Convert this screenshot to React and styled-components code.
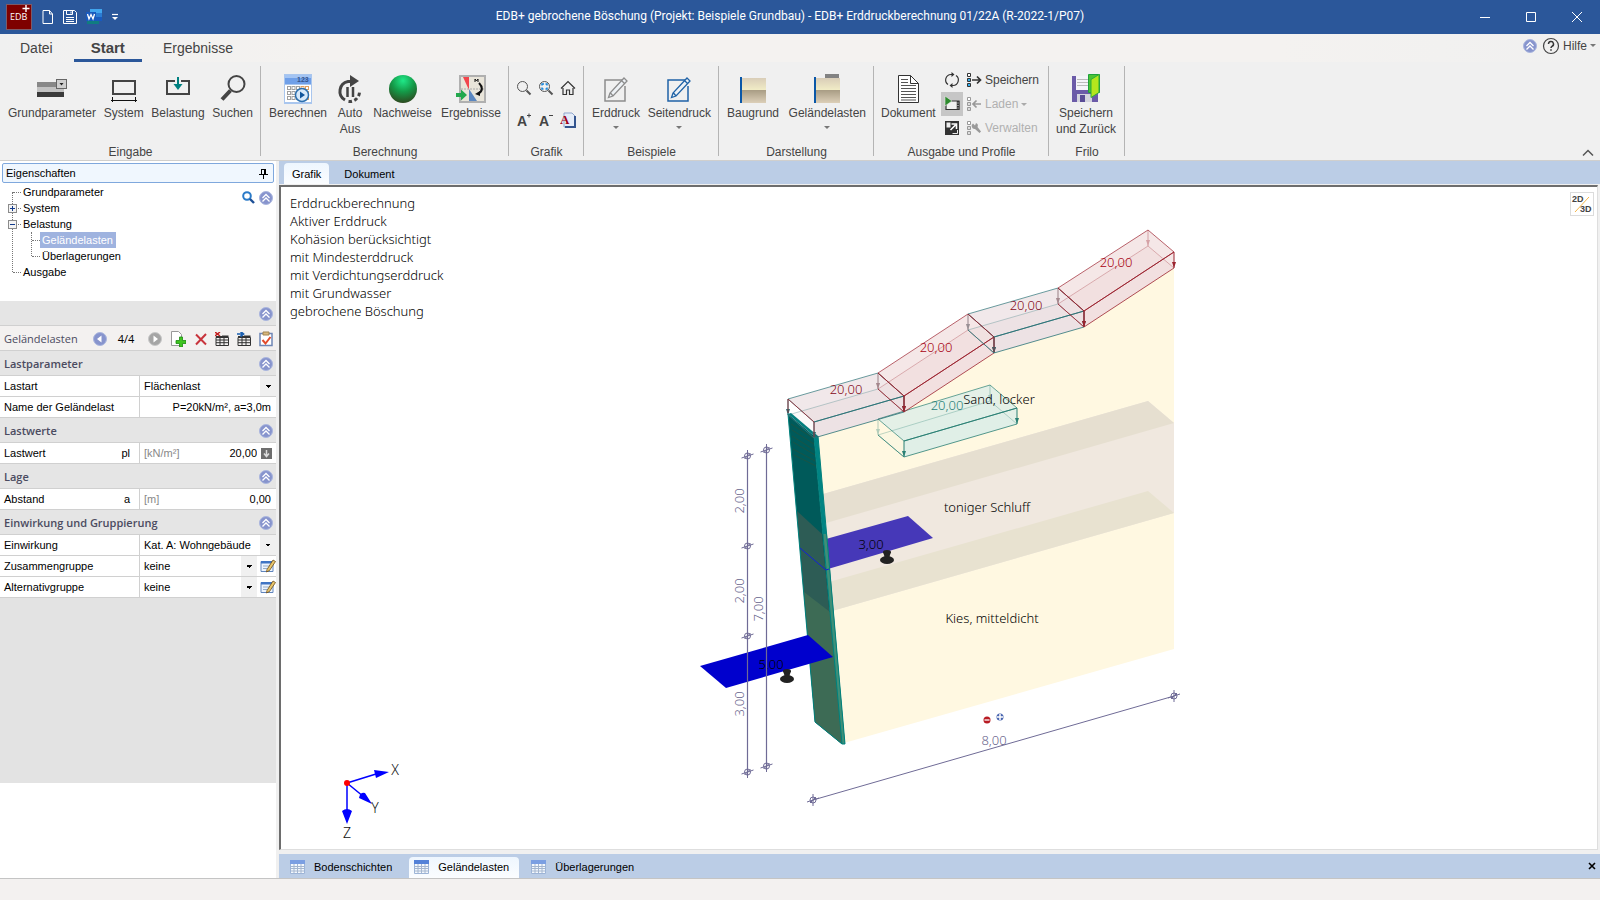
import React, { useState } from 'react'
import styled, { createGlobalStyle, css } from 'styled-components'

const GlobalStyle = createGlobalStyle`
  * { box-sizing: border-box; }
  html, body, #root { height: 100%; margin: 0; }
  body { font-family: 'Liberation Sans', Arial, sans-serif; font-size: 11px; color: #000; background: #f0f0f0; overflow: hidden; }
  button, input, select { font: inherit; color: inherit; margin: 0; }
  button { background: none; border: 0; padding: 0; }
  svg { display: block; }
  h2 { margin: 0; }
`

/* ---------- icons ---------- */
const Svg = ({ w = 16, h = w, box, children }) => (
  <svg width={w} height={h} viewBox={box || `0 0 ${w} ${h}`} fill='none' aria-hidden='true'>
    {children}
  </svg>
)

const Logo = () => (
  <Svg w={26}>
    <rect x='.5' y='.5' width='25' height='25' fill='#7e0000' stroke='#7d5a68' />
    <text x='4' y='16' fontSize='9' fontFamily='Open Sans, sans-serif' fill='#fff'>EDB</text>
    <path d='M20 1v7M16.500 4.500h7' stroke='#fff' strokeWidth='1.400' />
  </Svg>
)
const NewIcon = () => (
  <Svg w={14} h={16} box='-2 0 14 16'>
    <path d='M1 1.500h6.500L10.500 5v9.500H1zM7.500 1.500V5h3' stroke='#fff' />
  </Svg>
)
const SaveIcon = () => (
  <Svg w={16}>
    <path d='M1.500 1.500h11l2 2v11h-13zM4.500 1.500v4h6v-4M9 2.500v2M4 8.500h8M4 10.500h8M4 12.500h8' stroke='#fff' />
  </Svg>
)
const WordIcon = () => (
  <Svg w={16}>
    <path d='M4 0h12v5H4z' fill='#41a5ee' />
    <path d='M4 4h12v4H4z' fill='#2b7cd3' />
    <path d='M4 8h12v4H4z' fill='#185abd' />
    <path d='M1 12h12v3H1z' fill='#107c80' />
    <path d='M0 3h10v9H0z' fill='#185abd' />
    <path d='M1.500 5l1.500 5 2-4.500L7 10l1.500-5' stroke='#fff' strokeWidth='1.300' />
  </Svg>
)
const GrundIcon = () => (
  <Svg w={32} h={28}>
    <path d='M1 7h27v5H1z' fill='#888' />
    <path d='M1 12h27v5H1z' fill='#c2c2c2' />
    <path d='M1 17h27v5H1z' fill='#3a3a3a' />
    <rect x='20.500' y='4.500' width='10' height='9' fill='#cfcfcf' stroke='#666' />
    <path d='M23.500 8h4l-2 2.500z' fill='#222' />
  </Svg>
)
const SystemIcon = () => (
  <Svg w={28}>
    <rect x='3' y='6' width='22' height='13' stroke='#444' strokeWidth='2' />
    <path d='M1 25.500h26M2.500 22v5M25.500 22v5' stroke='#111' />
  </Svg>
)
const BelastIcon = () => (
  <Svg w={28}>
    <rect x='3' y='6' width='22' height='13' stroke='#444' strokeWidth='2' />
    <path d='M11 3h6v5h-6z' fill='#f0f0f0' />
    <path d='M14 2v9' stroke='#008080' strokeWidth='2' />
    <path d='M9.500 9h9L14 15z' fill='#008080' />
  </Svg>
)
const SearchBigIcon = () => (
  <Svg w={28}>
    <circle cx='17.500' cy='9' r='8' stroke='#444' strokeWidth='2' />
    <path d='M11.500 15.500L3 24.500' stroke='#444' strokeWidth='4' />
  </Svg>
)
const CalcIcon = () => (
  <Svg w={30}>
    <rect x='1' y='0' width='28' height='30' fill='#a9c6ee' />
    <rect x='2' y='1' width='26' height='9' fill='#6f9fe8' />
    <rect x='2' y='1' width='26' height='3' fill='#a3c4f3' />
    <text x='14' y='8' fontSize='7' fontWeight='700' fill='#35548c'>123</text>
    <rect x='2' y='11' width='26' height='17' fill='#fff' />
    {[12.5, 17.5, 22.5].map((y) =>
      [4.5, 9, 13.5, 18, 22.5].map((x) => (
        <rect key={`${x}-${y}`} x={x} y={y} width='3' height='3' fill='#fff' stroke={x > 17 ? '#e0a060' : '#a0a0a0'} />
      ))
    )}
    <circle cx='19' cy='21' r='6.500' fill='#d7e9fa' stroke='#2c6fae' strokeWidth='1.500' />
    <path d='M17 17.500l5 3.500-5 3.500z' fill='#12569c' />
  </Svg>
)
const AutoIcon = () => (
  <Svg w={28}>
    <path d='M9 25A10 10 0 0 1 12 6.500h4' stroke='#444' strokeWidth='3' />
    <path d='M14 0l9 6-9 6z' fill='#444' />
    <path d='M12.500 26.500a10 10 0 0 0 11-9' stroke='#444' strokeWidth='3' strokeDasharray='3.500 2.500' />
    <path d='M11.500 12v10M17 12v10' stroke='#444' strokeWidth='2.500' />
  </Svg>
)
const BallIcon = () => (
  <Svg w={30}>
    <defs>
      <radialGradient id='ball' cx='.5' cy='.2' r='.8'>
        <stop offset='0' stopColor='#1fe888' />
        <stop offset='.5' stopColor='#149a48' />
        <stop offset='1' stopColor='#2d4a20' />
      </radialGradient>
    </defs>
    <circle cx='15' cy='15' r='14' fill='url(#ball)' />
  </Svg>
)
const ResultIcon = () => (
  <Svg w={32} h={30}>
    <rect x='5' y='2' width='25' height='26' fill='#e9e5da' stroke='#b0b0b0' strokeWidth='2' />
    <path d='M8 3h6v13z' fill='#f2454c' />
    <path d='M14 15l8 12h-8z' fill='#5b87c0' />
    <path d='M6 15h23' stroke='#aaa' strokeDasharray='2 1' />
    <path d='M24 9c4 4 4 8-1 11' stroke='#111' strokeWidth='2' />
    <path d='M20 20l5-3v5z' fill='#111' />
    <path d='M20 8V5l1.500 2L23 5v3' stroke='#111' />
    <path d='M1 19h5v-3.500l6 5.500-6 5.500V23H1z' fill='#22a84d' />
  </Svg>
)
const LupeIcon = ({ area }) => (
  <Svg w={16}>
    <circle cx='6.500' cy='6.500' r='5' stroke='#555' />
    <path d='M10.500 10.500l4 4' stroke='#555' strokeWidth='2' />
    {area && <path d='M4 5.500V4h2M7.500 4H9v1.500M9 7.500V9H7.500M5.500 9H4V7.500' stroke='#1683d8' strokeWidth='1.500' />}
  </Svg>
)
const HomeIcon = () => (
  <Svg w={16}>
    <path d='M1 8.500L8 1.500l7 7M3 8v6.500h3.500V10h3v4.500H13V8' stroke='#333' strokeWidth='1.200' />
  </Svg>
)
const FontIcon = ({ sign }) => (
  <Svg w={16}>
    <text x='1' y='14' fontSize='14' fontWeight='700' fill='#444'>A</text>
    <path d={sign === '+' ? 'M11 3.500h4M13 1.500v4' : 'M11 3.500h4'} stroke='#444' />
  </Svg>
)
const FontDocIcon = () => (
  <Svg w={16}>
    <path d='M4 1h8l3 3v11H4z' fill='#e4ecf8' stroke='#8fa5cc' />
    <path d='M15 4v11H5' stroke='#33548e' strokeWidth='2' />
    <text x='0' y='12' fontSize='13' fontWeight='700' fontFamily='Liberation Serif, serif' fill='#a00018'>A</text>
  </Svg>
)
const EditIcon = ({ color }) => (
  <Svg w={28}>
    <path d='M20 5H3v21h20V11' stroke={color} strokeWidth='1.500' />
    <path d='M22 3l3 3L11 21l-4.500 1.500L8 18zM19.500 5.500l3 3M8.500 18l2.500 3' stroke={color} strokeWidth='1.300' fill='#eef2f6' />
  </Svg>
)
const SoilIcon = ({ load }) => (
  <Svg w={28} h={30}>
    <defs>
      <linearGradient id='soilTop' x1='0' y1='0' x2='0' y2='1'>
        <stop offset='0' stopColor='#d9cdb8' />
        <stop offset='1' stopColor='#f1ecc6' />
      </linearGradient>
      <linearGradient id='soilLow' x1='0' y1='0' x2='0' y2='1'>
        <stop offset='0' stopColor='#a89c84' />
        <stop offset='1' stopColor='#dccfb8' />
      </linearGradient>
    </defs>
    {load && <path d='M12 0h14v5H12z' fill='#828282' />}
    <path d='M2 4h25v12H2z' fill='url(#soilTop)' />
    <path d='M2 16h25v13H2z' fill='url(#soilLow)' />
    <path d='M2 3v26' stroke='#0a57a8' strokeWidth='2' />
  </Svg>
)
const DocIcon = () => (
  <Svg w={24} h={30}>
    <path d='M2.500 1.500h12l8 8v19h-20z' fill='#fff' stroke='#333' />
    <path d='M14.500 1.500v8h8' stroke='#333' />
    <path d='M5 5.500h7M5 8.500h7M5 11.500h15M5 14.500h15M5 17.500h15M5 20.500h15M5 23.500h15M5 26h15' stroke='#555' />
  </Svg>
)
const RefreshIcon = () => (
  <Svg w={16}>
    <path d='M4 12.500A5.500 5.500 0 0 1 7 2.500h2M12 3.500a5.500 5.500 0 0 1-3 10H7' stroke='#333' strokeWidth='1.200' />
    <path d='M7.500 0l3 2.500-3 2.500zM8.500 11l-3 2.500 3 2.500z' fill='#333' />
  </Svg>
)
const FilmIcon = () => (
  <Svg w={16}>
    <path d='M2 5h13v8.500H2z' fill='#f0f0f0' stroke='#333' strokeWidth='1.200' />
    <path d='M14 5v9' stroke='#333' strokeWidth='2.500' />
    <path d='M13.500 7h1M13.500 9.500h1M13.500 12h1' stroke='#eee' />
    <path d='M1 0l7 5-7 5z' fill='#2e8b2e' stroke='#e8e8e8' strokeWidth='.6' />
  </Svg>
)
const ExpandIcon = () => (
  <Svg w={16}>
    <path d='M1 1h14v14H1z' fill='#333' />
    <path d='M2.500 2.500h4v5h-4z' fill='#eee' />
    <path d='M8.500 13.500H13.500V10' stroke='#eee' />
    <path d='M6.500 10l5-5M7.500 4h5v5' stroke='#fff' strokeWidth='1.600' />
  </Svg>
)
const ProfileIcon = ({ kind }) => {
  const c = kind === 'save' ? '#333' : '#999'
  return (
    <Svg w={16}>
      <path d='M1.500 1.500h3v3h-3z' stroke={c} fill='#fff' />
      <path d='M1.500 6.500h3v3h-3zM1.500 11.500h3v3h-3z' stroke={c} fill={kind === 'save' ? '#35b0f0' : '#ddd'} />
      {kind === 'save' && <path d='M6 8h8M11 4.500L14.500 8 11 11.500' stroke={c} strokeWidth='1.700' />}
      {kind === 'load' && <path d='M15 8H8M10.500 4.500L7 8l3.500 3.500' stroke={c} strokeWidth='1.700' />}
      {kind === 'tool' && <path d='M7 3.500l2 2 1-2.500a3 3 0 0 1 1.500 4l3.500 4.500-1.500 1.500L9 9a3 3 0 0 1-2-5.500z' fill={c} />}
    </Svg>
  )
}
const SaveBackIcon = () => (
  <Svg w={30}>
    <path d='M1 2h26v26H1z' fill='#6b5ba8' />
    <path d='M5 2h13v14H5z' fill='#f4f4f8' />
    <path d='M6 5.500h11M6 8.500h11M6 11.500h11' stroke='#bbb' />
    <path d='M6 20h15v8H6z' fill='#d4d4de' />
    <path d='M9 21h5v7H9z' fill='#5a4c96' />
    <path d='M17.500 .5h11v18h-11z' fill='#4cc435' stroke='#1ea03c' />
    <path d='M20 5.500l8-5v18l-8 5z' fill='#b5e61d' stroke='#2cab3c' />
  </Svg>
)
const UpDisc = () => (
  <Svg w={14}>
    <circle cx='7' cy='7' r='6.500' fill='#8794cd' stroke='#aab6de' />
    <path d='M3.500 7L7 3.500 10.500 7M3.500 10.500L7 7l3.500 3.500' stroke='#fff' strokeWidth='1.300' />
  </Svg>
)
const StepDisc = ({ next }) => (
  <Svg w={14}>
    <circle cx='7' cy='7' r='6.500' fill={next ? '#a5a5a5' : '#8794cd'} stroke={next ? '#c8c8c8' : '#aab6de'} />
    <path d={next ? 'M5.500 3.500L10 7l-4.500 3.500z' : 'M8.500 3.500L4 7l4.500 3.500z'} fill='#fff' />
  </Svg>
)
const AddIcon = () => (
  <Svg w={16}>
    <path d='M1.500 .5h7l3 3v11h-10z' fill='#fff' stroke='#999' />
    <path d='M9.500 6h3v3.500H16v3h-3.500V16h-3v-3.500H6v-3h3.500z' fill='#3fc41f' stroke='#1c8a10' strokeWidth='.8' />
  </Svg>
)
const CrossIcon = () => (
  <Svg w={14}>
    <path d='M2 2.500l10 10M12 2L2 12.500' stroke='#c8343c' strokeWidth='2' />
  </Svg>
)
const GridIcon = ({ mark }) => (
  <Svg w={14}>
    <path d='M1 5.500h12.500v8H1zM1 8h12M1 10.700h12M5 5.500v8M9 5.500v8' stroke='#333' />
    <path d='M1 4.500h12.500' stroke='#333' strokeWidth='2' />
    <path d='M0 0h7v4H0z' fill='#f3f1f0' />
    {mark === 'x' ? (
      <path d='M0 0l5 4M5 0L0 4' stroke='#c32020' strokeWidth='1.500' />
    ) : (
      <path d='M0 2h5M3.500 -.5L6.500 2 3.500 4.500' stroke='#1a5fb0' strokeWidth='1.700' />
    )}
  </Svg>
)
const ClipIcon = () => (
  <Svg w={14} h={16}>
    <path d='M1 2.500h12v12H1z' fill='#fff' stroke='#6f86b5' strokeWidth='1.500' />
    <path d='M4 1h6v3H4z' fill='#d9b87c' stroke='#a08450' />
    <path d='M3.500 9l3 3.500L11.500 6' stroke='#e24a2a' strokeWidth='2' />
  </Svg>
)
const NoteIcon = () => (
  <Svg w={16}>
    <path d='M1 3.500h12v10H1z' fill='#eef4fc' stroke='#6085bd' />
    <path d='M1 3h12v2.500H1z' fill='#3f74c4' />
    <path d='M3 8h6M3 10.500h4' stroke='#94abc9' />
    <path d='M7 11.500l6-9.500 2.500 1.500-6 9L6.500 14z' fill='#e8c56a' stroke='#6b4b1c' strokeWidth='.8' />
  </Svg>
)
const TableIcon = ({ hot }) => (
  <Svg w={16} h={14}>
    <path d='M.5 .5h14v13H.5z' fill='#f4f8fd' stroke='#9db4d6' />
    <path d='M0 0h15v4H0z' fill={hot ? '#5482d8' : '#7b9fe2'} />
    <path d='M1 6.500h13M1 8.500h13M1 11h13M4 4v9M7.500 4v9M11 4v9' stroke='#a4b6cf' />
  </Svg>
)

/* ---------- title bar ---------- */
const Shell = styled.div`
  display: flex;
  flex-direction: column;
  min-height: 100vh;
`
const TitleBar = styled.header`
  display: grid;
  grid-template-columns: 1fr auto 1fr;
  align-items: center;
  height: 34px;
  background: #2b579a;
  color: #fff;
`
const QuickBar = styled.div`
  display: flex;
  align-items: center;
  gap: 8px;
  padding-left: 6px;
`
const Title = styled.div`
  font: 12px/20px Roboto, sans-serif;
  padding-bottom: 2px;
  margin-right: 20px;
`
const WinButtons = styled.div`
  display: flex;
  justify-content: flex-end;
  button { width: 46px; height: 34px; display: grid; place-items: center; }
`

/* ---------- ribbon ---------- */
const TabRow = styled.nav`
  display: flex;
  height: 28px;
  padding-left: 2px;
  background: linear-gradient(90deg, #f0f0f0, #f4f2f0 20%, #f4f2f0 80%, #f0f0f0);
  color: #444;
`
const RibbonTab = styled.button`
  padding: 2px 18px 0;
  font-size: 14px;
  line-height: 24px;
  border-bottom: 3px solid transparent;
  ${(p) => p.$active && css`
    padding: 2px 17px 0;
    font-size: 15px;
    font-weight: 700;
    border-color: #2b579a;
    margin: 0 3px;
  `}
`
const HelpBox = styled.div`
  margin-left: auto;
  display: flex;
  align-items: center;
  gap: 5px;
  padding: 0 4px 5px 0;
  font-size: 12px;
  button { display: flex; align-items: center; gap: 3px; }
`
const Ribbon = styled.section`
  display: flex;
  height: 99px;
  padding-top: 4px;
  border-bottom: 1px solid #d0cfcd;
  background: #f0f0f0;
  color: #444;
  font-size: 12px;
  line-height: 16px;
`
const Group = styled.div`
  flex: none;
  width: ${(p) => p.$w}px;
  display: flex;
  flex-direction: column;
  background: linear-gradient(#b4b4b4, #b4b4b4) right top / 1px 90px no-repeat;
`
const GroupBody = styled.div`
  flex: 1;
  display: flex;
  justify-content: space-between;
  padding: 7px ${(p) => p.$pad || 8}px 0;
`
const GroupName = styled.div`
  text-align: center;
  height: 16px;
`
const BigButton = styled.button`
  display: flex;
  flex-direction: column;
  align-items: center;
  white-space: pre;
  line-height: 16px;
  align-self: flex-start;
`
const BigIcon = styled.span`
  height: 32px;
  display: grid;
  place-items: center;
`
const Caret = styled.span`
  display: inline-block;
  width: 0;
  height: 0;
  border: 3px solid transparent;
  border-top-color: #777;
  border-bottom: 0;
  ${(p) => p.$below && css`margin-top: 5px;`}
`
const IconGrid = styled.div`
  display: grid;
  grid-template-columns: repeat(3, 22px);
  grid-auto-rows: 32px;
  margin-top: -1px;
  button { display: grid; place-items: center; }
`
const SmallCol = styled.div`
  display: flex;
  flex-direction: column;
  margin-top: -5px;
  &:nth-child(2) { margin-left: auto; }
`
const SmallButton = styled.button`
  display: flex;
  align-items: center;
  gap: 3px;
  height: 24px;
  padding: 0 3px;
  color: ${(p) => (p.$off ? '#b0b0b0' : '#444')};
  background: ${(p) => (p.$on ? '#c6c6c6' : 'none')};
  ${Caret} { border-top-color: #aaa; }
`
const Collapse = styled.button`
  margin: auto 6px 0 auto;
  padding: 0 0 3px;
`

/* ---------- left panel ---------- */
const Body = styled.main`
  flex: 1;
  display: flex;
  min-height: 0;
`
const Side = styled.aside`
  flex: none;
  width: 276px;
  display: flex;
  flex-direction: column;
  background: #fff;
`
const SideHead = styled.div`
  display: flex;
  align-items: center;
  justify-content: space-between;
  height: 20px;
  margin: 2px 2px 0;
  padding: 0 5px 0 3px;
  border: 1px solid #7fa8dd;
  border-radius: 2px;
  background: #f0f7fe;
`
const TreeBox = styled.div`
  display: flex;
  justify-content: space-between;
  height: 118px;
  padding: 1px 3px 0 0;
`
const TreeTools = styled.div`
  display: flex;
  gap: 4px;
  padding-top: 5px;
  height: 22px;
`
const Tree = styled.ul`
  list-style: none;
  margin: 0;
  padding: 0;
  position: relative;
  &::before {
    content: '';
    position: absolute;
    left: 12px;
    top: ${(p) => (p.$sub ? 0 : 8)}px;
    height: ${(p) => p.$line}px;
    border-left: 1px dotted #777;
  }
  ${(p) => p.$sub && css`margin-left: -5px;`}
`
const TreeItem = styled.li`
  position: relative;
  line-height: 16px;
  padding-left: 24px;
  &::before {
    content: '';
    position: absolute;
    left: 13px;
    top: 8px;
    width: 8px;
    border-top: 1px dotted #777;
  }
`
const Pick = styled.button`
  padding: 0 3px 0 2px;
  margin-left: -3px;
  line-height: 16px;
  ${(p) => p.$on && css`background: #9fb3df; color: #fff;`}
`
const Expander = styled.span`
  position: absolute;
  z-index: 1;
  left: 8px;
  top: 4px;
  width: 9px;
  height: 9px;
  border: 1px solid #8b8b8b;
  background: linear-gradient(#123a8c, #123a8c) center / 5px 1px no-repeat, #f4f4f4;
  ${(p) => p.$plus && css`
    background: linear-gradient(#123a8c, #123a8c) center / 5px 1px no-repeat,
      linear-gradient(#123a8c, #123a8c) center / 1px 5px no-repeat, #f4f4f4;
  `}
`
const SectionHead = styled.div`
  display: flex;
  align-items: center;
  justify-content: space-between;
  height: 25px;
  padding: 1px 3px 0 4px;
  border-bottom: 1px solid #d0d0d0;
  background: #e5e5e5;
  h2 { font: 600 11px/18px 'Open Sans', sans-serif; color: #4b4b60; }
`
const RecordBar = styled.div`
  display: flex;
  align-items: center;
  height: 25px;
  padding: 1px 3px 0 4px;
  border-bottom: 1px solid #d0d0d0;
  background: #f3f1f0;
  h2 { font: 500 11px/18px 'Open Sans', sans-serif; color: #4b4b60; width: 89px; }
  output { width: 38px; text-align: center; margin-right: 3px; font: 11px/18px 'Open Sans', sans-serif; }
`
const RecordTools = styled.div`
  display: flex;
  align-items: center;
  justify-content: space-between;
  flex: 1;
`
const Row = styled.div`
  display: grid;
  grid-template-columns: 139px 1fr;
  height: 21px;
  border-bottom: 1px solid #d0d0d0;
  background: #fff;
  line-height: 20px;
  label { display: flex; justify-content: space-between; padding: 0 9px 0 4px; }
`
const Cell = styled.div`
  display: flex;
  align-items: center;
  min-width: 0;
  border-left: 1px solid #d0d0d0;
  padding-left: 4px;
`
const Unit = styled.span`
  color: #888;
`
const Field = styled.input`
  flex: 1;
  min-width: 0;
  height: 18px;
  border: 0;
  padding: 0;
  margin-right: ${(p) => (p.$tight ? 0 : 5)}px;
  text-align: right;
  background: none;
  outline: 0;
`
const Select = styled.select`
  flex: 1;
  min-width: 0;
  height: 20px;
  border: 0;
  outline: 0;
  padding: 0 16px 0 0;
  appearance: none;
  background:
    linear-gradient(45deg, transparent 50%, #000 50%) right 8px center / 3px 3px no-repeat,
    linear-gradient(-45deg, transparent 50%, #000 50%) right 5px center / 3px 3px no-repeat,
    linear-gradient(#f0f0f0, #f0f0f0) right / 16px 20px no-repeat;
`
const NoteButton = styled.button`
  padding: 0 0 0 3px;
`
const Filler = styled.div`
  height: 185px;
  background: #e3e3e3;
`

/* ---------- drawing area ---------- */
const Work = styled.section`
  flex: 1;
  min-width: 0;
  display: flex;
  flex-direction: column;
  margin-left: 3px;
`
const DocTabs = styled.div`
  display: flex;
  align-items: flex-end;
  height: 23px;
  padding-left: 5px;
  background: #bbcde6;
`
const DocTab = styled.button`
  height: 21px;
  display: flex;
  align-items: center;
  padding: 0 8px;
  margin-right: 7px;
  border-radius: 4px 4px 0 0;
  background: ${(p) => (p.$on ? 'linear-gradient(#eef6fe, #fbfdff)' : 'none')};
`
const Canvas = styled.div`
  position: relative;
  flex: 1;
  min-height: 0;
  margin: 1px 2px 4px 0;
  border: solid #6d6d6d;
  border-width: 2px 1px 1px 2px;
  border-right-color: #dedede;
  border-bottom-color: #dedede;
  background: #fff;
  > svg { position: absolute; inset: 0; width: 100%; height: 100%; }
`
const Info = styled.div`
  position: absolute;
  left: 9px;
  top: 7px;
  font: 300 13px/18px 'Noto Sans', sans-serif;
  color: #000;
`
const ViewButton = styled.button`
  position: absolute;
  right: 3px;
  top: 5px;
  border: 1px solid #dcdcdc;
  background: #fff;
`
const BottomTabs = styled(DocTabs)`
  height: 24px;
  padding-left: 6px;
`
const TableTab = styled(DocTab)`
  gap: 8px;
  padding: 0 10px 2px 5px;
`
const CloseTab = styled.button`
  margin: 0 0 1px auto;
  padding: 4px;
  align-self: center;
`
const Status = styled.footer`
  height: 22px;
  border-top: 1px solid #c4c4c4;
  background: #f3f1f0;
`

/* ---------- 3D scene ---------- */
const back = [[788, 399], [878, 373], [968, 314], [1058, 288], [1148, 230]]
const front = [[814, 422], [904, 396], [994, 337], [1084, 311], [1174, 252]]
const labels = [[846, 390], [936, 348], [1026, 306], [1116, 263]]
const down = ([x, y]) => [x, y + 16]
const pts = (...list) => list.map((p) => p.join(',')).join(' ')

const Arrow = ({ at: [x, y], color, faint }) => (
  <g opacity={faint ? 0.35 : 1}>
    <path d={`M${x} ${y}v16`} stroke={color} />
    <path d={`M${x - 2} ${y + 10}h4l-2 6z`} fill={color} />
  </g>
)

const LoadBox = ({ i, b0, b1, f0, f1, color, fill, alpha = 0.11, label, text }) => (
  <g>
    <g fill={fill}>
      <polygon points={pts(b0, b1, f1, down(f1), down(f0), f0)} fillOpacity={alpha} />
      <polygon points={pts(down(b0), down(b1), down(f1), down(f0))} fillOpacity='.03' />
    </g>
    <g stroke={color} strokeWidth='1' fill='none'>
      <polyline points={pts(down(f0), down(b0), down(b1), down(f1))} opacity='.3' />
      <polygon points={pts(b0, b1, f1, f0)} opacity='.7' />
      <path d={`M${f0}L${f1}`} />
      <path d={`M${down(f0)}L${down(f1)}M${down(b0)}L${down(f0)}`} opacity='.8' />
    </g>
    <Arrow at={b0} color={color} faint={i > 0} />
    <Arrow at={b1} color={color} faint />
    <Arrow at={f0} color={color} />
    <Arrow at={f1} color={color} />
    <text x={label[0]} y={label[1]} dy='4' fill={text} textAnchor='middle'>20,00</text>
  </g>
)

const Mark = ({ x, y }) => (
  <g>
    <circle cx={x} cy={y} r='3' />
    <path d={`M${x} ${y - 6}v12M${x - 6} ${y + 2}l12-4M${x - 3} ${y + 3}l6-6`} />
  </g>
)

const Support = ({ x, y }) => (
  <g fill='#222'>
    <ellipse cx={x} cy={y} rx='7' ry='4' />
    <path d={`M${x - 4} ${y - 8}h8l-2 6h-4z`} />
    <ellipse cx={x} cy={y - 8} rx='4' ry='2' />
  </g>
)

const Scene = () => (
  <svg viewBox='281 187 1316 662' fontFamily='Noto Sans, sans-serif' fontWeight='300' fontSize='13' role='img' aria-label='Böschung'>
    <polygon points='817,437 904,412 994,353 1084,327 1174,268 1174,649 844,743' fill='#fff8e1' />
    <polygon points='823,494 1148,401 1174,423 1174,513 832,611' fill='#f0e8df' />
    <polygon points='823,494 1148,401 1174,423 826,523' fill='#e6dfd0' />
    <polygon points='829,582 1148,491 1174,513 832,611' fill='#e8e2d0' />

    <polygon points='826,539 908,516 933,538 828,569' fill='#4638b8' />
    <polygon points='788,414 814,436 842,744 815,722' fill='#005a5a' />
    <polygon points='797,511 822,534 842,744 815,722' fill='#2d5c55' />
    <polygon points='804,592 830,612 842,744 815,722' fill='#3d6b55' />
    <polygon points='788,414 814,436 818,436 791,413' fill='#008080' />
    <polygon points='814,436 818,436 845,744 842,744' fill='#008484' />
    <polygon points='823,534 827,534 845,744 842,744' fill='#3f8f78' />
    <path d='M788 414L815 722L842 744h3L818 436M814 436L842 744' stroke='#00807c' fill='none' />
    <g stroke='#4b4a20' strokeWidth='1' opacity='.35'>
      <path d='M791 424l22 14M792 430l22 14M792 436l22 14M793 442l22 13M793 449l22 12M794 455l22 11' />
    </g>
    <path d='M800 548L826 570L829 569' stroke='#1420d8' fill='none' />
    <polygon points='700,666 808,635 833,657 726,688' fill='#0000cd' />

    <LoadBox i={1} b0={[878, 419]} b1={[990, 385]} f0={[904, 441]} f1={[1017, 408]} color='#2a8074' fill='#84d4ff' alpha={0.22} label={[947, 406]} text='#1f8078' />
    {labels.map((label, i) => (
      <LoadBox
        key={label[0]}
        i={i}
        b0={back[i]}
        b1={back[i + 1]}
        f0={front[i]}
        f1={front[i + 1]}
        color={i % 2 ? '#9c2430' : '#2c7478'}
        fill={i % 2 ? '#a02020' : '#803040'}
        label={label}
        text={i % 2 ? '#a80010' : '#840818'}
      />
    ))}
    <g stroke='#98202c' fill='none' opacity='.8'>
      <path d='M788 399l26 23M878 373l26 23M968 314l26 23M1058 288l26 23' />
      <path d='M788 399v14M814 422v15M904 396v15M994 337v15M1084 311v15' />
    </g>

    <g fill='#000' textAnchor='middle'>
      <text x='999' y='404'>Sand, locker</text>
      <text x='987' y='512'>toniger Schluff</text>
      <text x='992' y='623'>Kies, mitteldicht</text>
      <text x='871' y='549'>3,00</text>
      <text x='771' y='669'>5,00</text>
    </g>
    <Support x={887} y={560} />
    <Support x={787} y={679} />

    <g stroke='#6f6b96' fill='none'>
      <path d='M747.500 452V776M766.500 446V770' strokeWidth='1.200' />
      <path d='M813 800L1174 696' />
      <Mark x={747.5} y={456} />
      <Mark x={747.5} y={546} />
      <Mark x={747.5} y={636} />
      <Mark x={747.5} y={772} />
      <Mark x={766.5} y={450} />
      <Mark x={766.5} y={766} />
      <Mark x={813} y={800} />
      <Mark x={1174} y={696} />
    </g>
    <g fill='#67638c' textAnchor='middle'>
      <text transform='translate(744 501) rotate(-90)'>2,00</text>
      <text transform='translate(744 591) rotate(-90)'>2,00</text>
      <text transform='translate(763 609) rotate(-90)'>7,00</text>
      <text transform='translate(744 704) rotate(-90)'>3,00</text>
      <text x='994' y='745'>8,00</text>
    </g>
    <circle cx='987' cy='720' r='3.500' fill='#b81c24' />
    <path d='M984.500 720h5' stroke='#fff' strokeWidth='1.300' />
    <circle cx='1000' cy='717' r='3.500' fill='#4a66b0' />
    <path d='M997 717h6M1000 714v6' stroke='#fff' strokeWidth='1.500' />

    <g stroke='#0000ff' strokeWidth='1.500' fill='#0000ff'>
      <path d='M347 783L376 774M347 783L364 797M347 783V812' />
      <path d='M374 770l15 2-13 6zM359 798q1-6 6-5l7 11zM342 811q5-4 10 0l-5 13z' stroke='none' />
    </g>
    <circle cx='347' cy='783' r='3' fill='#f00' />
    <g fill='#111' fontSize='14' textAnchor='middle'>
      <text x='395' y='775'>X</text>
      <text x='375' y='813'>Y</text>
      <text x='347' y='838'>Z</text>
    </g>
  </svg>
)

const Big = ({ icon, label, caret }) => (
  <BigButton>
    <BigIcon>{icon}</BigIcon>
    {label}
    {caret && <Caret $below />}
  </BigButton>
)

const Head = ({ children }) => (
  <SectionHead>
    <h2>{children}</h2>
    <button aria-label='Einklappen'><UpDisc /></button>
  </SectionHead>
)

const SelectRow = ({ id, label, value, note }) => (
  <Row>
    <label htmlFor={id}>{label}</label>
    <Cell>
      <Select id={id} defaultValue={value}>
        <option>{value}</option>
      </Select>
      {note && <NoteButton aria-label={`${label} bearbeiten`}><NoteIcon /></NoteButton>}
    </Cell>
  </Row>
)

const App = () => {
  const [name, setName] = useState('P=20kN/m², a=3,0m')
  const [load, setLoad] = useState('20,00')
  const [dist, setDist] = useState('0,00')

  return (
    <Shell>
      <GlobalStyle />
      <TitleBar>
        <QuickBar>
          <Logo />
          <button aria-label='Neu'><NewIcon /></button>
          <button aria-label='Speichern'><SaveIcon /></button>
          <button aria-label='Word'><WordIcon /></button>
          <button aria-label='Anpassen'>
            <Svg w={14} h={10}>
              <path d='M2 2.500h6' stroke='#fff' strokeWidth='1.200' />
              <path d='M2 5h6L5 8z' fill='#fff' />
            </Svg>
          </button>
        </QuickBar>
        <Title>EDB+ gebrochene Böschung (Projekt: Beispiele Grundbau) - EDB+ Erddruckberechnung 01/22A (R-2022-1/P07)</Title>
        <WinButtons>
          <button aria-label='Minimieren'><Svg w={10}><path d='M0 5.500h10' stroke='#fff' /></Svg></button>
          <button aria-label='Maximieren'><Svg w={10}><path d='M.5 .5h9v9h-9z' stroke='#fff' /></Svg></button>
          <button aria-label='Schließen'><Svg w={10}><path d='M0 0l10 10M10 0L0 10' stroke='#fff' /></Svg></button>
        </WinButtons>
      </TitleBar>

      <TabRow>
        <RibbonTab>Datei</RibbonTab>
        <RibbonTab $active>Start</RibbonTab>
        <RibbonTab>Ergebnisse</RibbonTab>
        <HelpBox>
          <button aria-label='Einklappen'><UpDisc /></button>
          <button>
            <Svg w={18}>
              <circle cx='9' cy='9' r='7.500' stroke='#444' strokeWidth='1.200' />
              <path d='M6.500 7a2.500 2.500 0 1 1 3.500 2.300q-1 .5-1 1.700M9 12.200v1.600' stroke='#333' strokeWidth='1.500' />
            </Svg>
            Hilfe <Caret />
          </button>
        </HelpBox>
      </TabRow>

      <Ribbon>
        <Group $w={261}>
          <GroupBody>
            <Big icon={<GrundIcon />} label='Grundparameter' />
            <Big icon={<SystemIcon />} label='System' />
            <Big icon={<BelastIcon />} label='Belastung' />
            <Big icon={<SearchBigIcon />} label='Suchen' />
          </GroupBody>
          <GroupName>Eingabe</GroupName>
        </Group>
        <Group $w={248}>
          <GroupBody>
            <Big icon={<CalcIcon />} label='Berechnen' />
            <Big icon={<AutoIcon />} label={'Auto\nAus'} />
            <Big icon={<BallIcon />} label='Nachweise' />
            <Big icon={<ResultIcon />} label='Ergebnisse' />
          </GroupBody>
          <GroupName>Berechnung</GroupName>
        </Group>
        <Group $w={75}>
          <GroupBody $pad={4}>
            <IconGrid>
              <button aria-label='Lupe'><LupeIcon /></button>
              <button aria-label='Ausschnitt'><LupeIcon area /></button>
              <button aria-label='Gesamt'><HomeIcon /></button>
              <button aria-label='Schrift größer'><FontIcon sign='+' /></button>
              <button aria-label='Schrift kleiner'><FontIcon sign='-' /></button>
              <button aria-label='Schriftart'><FontDocIcon /></button>
            </IconGrid>
          </GroupBody>
          <GroupName>Grafik</GroupName>
        </Group>
        <Group $w={135}>
          <GroupBody>
            <Big icon={<EditIcon color='#8c8c8c' />} label='Erddruck' caret />
            <Big icon={<EditIcon color='#1f62a6' />} label='Seitendruck' caret />
          </GroupBody>
          <GroupName>Beispiele</GroupName>
        </Group>
        <Group $w={155}>
          <GroupBody>
            <Big icon={<SoilIcon />} label='Baugrund' />
            <Big icon={<SoilIcon load />} label='Geländelasten' caret />
          </GroupBody>
          <GroupName>Darstellung</GroupName>
        </Group>
        <Group $w={175}>
          <GroupBody $pad={7}>
            <Big icon={<DocIcon />} label='Dokument' />
            <SmallCol>
              <SmallButton aria-label='Aktualisieren'><RefreshIcon /></SmallButton>
              <SmallButton aria-label='Vorschau' $on><FilmIcon /></SmallButton>
              <SmallButton aria-label='Vergrößern'><ExpandIcon /></SmallButton>
            </SmallCol>
            <SmallCol>
              <SmallButton><ProfileIcon kind='save' />Speichern</SmallButton>
              <SmallButton $off><ProfileIcon kind='load' />Laden <Caret /></SmallButton>
              <SmallButton $off><ProfileIcon kind='tool' />Verwalten</SmallButton>
            </SmallCol>
          </GroupBody>
          <GroupName>Ausgabe und Profile</GroupName>
        </Group>
        <Group $w={76}>
          <GroupBody $pad={7}>
            <Big icon={<SaveBackIcon />} label={'Speichern\nund Zurück'} />
          </GroupBody>
          <GroupName>Frilo</GroupName>
        </Group>
        <Collapse aria-label='Menüband einklappen'>
          <Svg w={12} h={8}><path d='M1 6.500L6 1.500l5 5' stroke='#555' strokeWidth='1.500' /></Svg>
        </Collapse>
      </Ribbon>

      <Body>
        <Side>
          <SideHead>
            Eigenschaften
            <button aria-label='Anheften'>
              <Svg w={9} h={11}><path d='M2.500 1v5M2 1.500h5M0 6.500h9M4.500 7v4' stroke='#000' /><path d='M6 1v5.500' stroke='#000' strokeWidth='2' /></Svg>
            </button>
          </SideHead>
          <TreeBox>
            <Tree $line={80}>
              <TreeItem><Pick>Grundparameter</Pick></TreeItem>
              <TreeItem><Expander $plus /><Pick>System</Pick></TreeItem>
              <TreeItem>
                <Expander /><Pick>Belastung</Pick>
                <Tree $sub $line={24}>
                  <TreeItem><Pick $on>Geländelasten</Pick></TreeItem>
                  <TreeItem><Pick>Überlagerungen</Pick></TreeItem>
                </Tree>
              </TreeItem>
              <TreeItem><Pick>Ausgabe</Pick></TreeItem>
            </Tree>
            <TreeTools>
              <button aria-label='Suchen'>
                <Svg w={13}>
                  <circle cx='5' cy='5' r='3.800' stroke='#2a7ac8' strokeWidth='2' />
                  <path d='M8 8l4 4' stroke='#1c4f96' strokeWidth='2.400' />
                </Svg>
              </button>
              <button aria-label='Einklappen'><UpDisc /></button>
            </TreeTools>
          </TreeBox>
          <Head />
          <RecordBar>
            <h2>Geländelasten</h2>
            <button aria-label='Zurück'><StepDisc /></button>
            <output>4/4</output>
            <RecordTools>
              <button aria-label='Weiter'><StepDisc next /></button>
              <button aria-label='Hinzufügen'><AddIcon /></button>
              <button aria-label='Löschen'><CrossIcon /></button>
              <button aria-label='Alle löschen'><GridIcon mark='x' /></button>
              <button aria-label='Tabelle einfügen'><GridIcon mark='go' /></button>
              <button aria-label='Prüfen'><ClipIcon /></button>
            </RecordTools>
          </RecordBar>

          <Head>Lastparameter</Head>
          <SelectRow id='art' label='Lastart' value='Flächenlast' />
          <Row>
            <label htmlFor='name'>Name der Geländelast</label>
            <Cell><Field id='name' value={name} onChange={(e) => setName(e.target.value)} /></Cell>
          </Row>
          <Head>Lastwerte</Head>
          <Row>
            <label htmlFor='load'>Lastwert <span>pl</span></label>
            <Cell>
              <Unit>[kN/m²]</Unit>
              <Field id='load' $tight value={load} onChange={(e) => setLoad(e.target.value)} />
              <NoteButton aria-label='Übernehmen'>
                <Svg w={16} h={13}>
                  <path d='M1 1h11v11H1z' fill='#6e6e6e' />
                  <path d='M6.500 3v6M4 6.500L6.500 9.500 9 6.500' stroke='#ddd' strokeWidth='1.500' />
                </Svg>
              </NoteButton>
            </Cell>
          </Row>
          <Head>Lage</Head>
          <Row>
            <label htmlFor='dist'>Abstand <span>a</span></label>
            <Cell>
              <Unit>[m]</Unit>
              <Field id='dist' value={dist} onChange={(e) => setDist(e.target.value)} />
            </Cell>
          </Row>
          <Head>Einwirkung und Gruppierung</Head>
          <SelectRow id='einw' label='Einwirkung' value='Kat. A: Wohngebäude' />
          <SelectRow id='zus' label='Zusammengruppe' value='keine' note />
          <SelectRow id='alt' label='Alternativgruppe' value='keine' note />
          <Filler />
        </Side>

        <Work>
          <DocTabs>
            <DocTab $on>Grafik</DocTab>
            <DocTab>Dokument</DocTab>
          </DocTabs>
          <Canvas>
            <Scene />
            <Info>
              Erddruckberechnung<br />
              Aktiver Erddruck<br />
              Kohäsion berücksichtigt<br />
              mit Mindesterddruck<br />
              mit Verdichtungserddruck<br />
              mit Grundwasser<br />
              gebrochene Böschung
            </Info>
            <ViewButton aria-label='2D/3D'>
              <Svg w={22}>
                <path d='M4 19L18 4' stroke='#f5b74a' />
                <text x='1' y='9' fontSize='9' fontWeight='700' fill='#444'>2D</text>
                <text x='9' y='19' fontSize='9' fontWeight='700' fill='#444'>3D</text>
              </Svg>
            </ViewButton>
          </Canvas>
          <BottomTabs>
            <TableTab><TableIcon />Bodenschichten</TableTab>
            <TableTab $on><TableIcon hot />Geländelasten</TableTab>
            <TableTab><TableIcon />Überlagerungen</TableTab>
            <CloseTab aria-label='Schließen'>
              <Svg w={8}><path d='M1 1l6 6M7 1L1 7' stroke='#000' strokeWidth='1.600' /></Svg>
            </CloseTab>
          </BottomTabs>
        </Work>
      </Body>
      <Status />
    </Shell>
  )
}

export default App
